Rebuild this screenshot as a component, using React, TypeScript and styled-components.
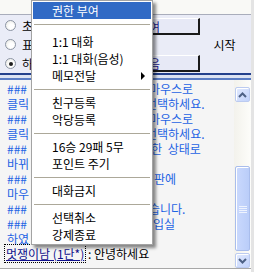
import React from 'react'
import styled, { createGlobalStyle, css } from 'styled-components'

const GlobalStyle = createGlobalStyle`
	html, body {
		margin: 0;
		padding: 0;
		background: #ffffff;
	}
	body {
		font-family: 'Noto Sans CJK KR', 'Noto Sans', sans-serif;
		font-size: 12px;
	}
`

// lead = start of the line, tail = the part that shows past the popup menu, at = x where the tail starts
const CHAT_LINES: { lead: string; tail?: string; at?: number }[] = [
	{ lead: '###', tail: '마우스로', at: 149 },
	{ lead: '클릭', tail: '선택하세요.', at: 146 },
	{ lead: '###', tail: '마우스로', at: 149 },
	{ lead: '클릭', tail: '선택하세요.', at: 146 },
	{ lead: '###', tail: '한 상태로', at: 151 },
	{ lead: '바뀌' },
	{ lead: '###', tail: '판에', at: 154 },
	{ lead: '마우' },
	{ lead: '###', tail: '습니다.', at: 149 },
	{ lead: '###', tail: '입실', at: 153 },
	{ lead: '하였' }
]

const MENU: ({ label: string; active?: boolean; sub?: boolean } | 'sep')[] = [
	{ label: '권한 부여', active: true },
	'sep',
	{ label: '1:1 대화' },
	{ label: '1:1 대화(음성)' },
	{ label: '메모전달', sub: true },
	'sep',
	{ label: '친구등록' },
	{ label: '악당등록' },
	'sep',
	{ label: '16승 29패 5무' },
	{ label: '포인트 주기' },
	'sep',
	{ label: '대화금지' },
	'sep',
	{ label: '선택취소' },
	{ label: '강제종료' }
]

export default function App() {
	return (
		<>
			<GlobalStyle />
			<Window>
				<TopStrip />
				<OptionsPanel>
					<RadioGroup>
						<RadioRow>
							<Radio />
							<RadioLabel>초보자</RadioLabel>
						</RadioRow>
						<RadioRow>
							<Radio />
							<RadioLabel>표준</RadioLabel>
						</RadioRow>
						<RadioRow>
							<Radio checked />
							<RadioLabel>하수</RadioLabel>
						</RadioRow>
					</RadioGroup>
					<ButtonStack>
						<PanelButton>참여</PanelButton>
						<PanelButton>다음</PanelButton>
					</ButtonStack>
					<StartLabel>시작</StartLabel>
				</OptionsPanel>
				<Divider />
				<ChatArea>
					<ChatLog>
						{CHAT_LINES.map((line, i) => (
							<ChatLine key={i} at={line.at}>
								<span>{line.lead}</span>
								{line.tail && <span>{line.tail}</span>}
							</ChatLine>
						))}
						<NickLine>
							<Nick>멋쟁이남 (1단*)</Nick>
							<Said> : 안녕하세요</Said>
						</NickLine>
					</ChatLog>
					<ScrollBar>
						<ScrollButton>
							<Chevron viewBox="0 0 9 6">
								<path d="M1 5 L4.5 1.5 L8 5" />
							</Chevron>
						</ScrollButton>
						<ScrollTrack>
							<Thumb>
								<Grip viewBox="0 0 8 8">
									<path d="M0 1.5 H8 M0 3.5 H8 M0 5.5 H8 M0 7.5 H8" />
								</Grip>
							</Thumb>
						</ScrollTrack>
						<ScrollButton>
							<Chevron viewBox="0 0 9 6">
								<path d="M1 1 L4.5 4.5 L8 1" />
							</Chevron>
						</ScrollButton>
					</ScrollBar>
				</ChatArea>
				<BottomEdge />

				<ContextMenu>
					{MENU.map((item, i) =>
						item === 'sep' ? (
							<MenuSeparator key={i} first={i === 1} />
						) : (
							<MenuItem key={i} active={item.active}>
								{item.label}
								{item.sub && <SubArrow />}
							</MenuItem>
						)
					)}
				</ContextMenu>
			</Window>
		</>
	)
}

const Window = styled.div`
	position: relative;
	width: 251px;
	height: 272px;
	overflow: hidden;
	display: flex;
	flex-direction: column;
	background: #f5f5f5;
	border-right: 3px solid #e4e4e4;
	color: #000;
`

const TopStrip = styled.div`
	height: 14px;
	background: #f9f9f6;
	border-bottom: 1px solid #a9adbb;
`

const OptionsPanel = styled.div`
	height: 58px;
	display: grid;
	grid-template-columns: 1fr 80px 51px;
	background: #eaecf7;
`

const RadioGroup = styled.div`
	display: flex;
	flex-direction: column;
	padding: 1px 0 0 5px;
`

const RadioRow = styled.label`
	height: 19px;
	display: flex;
	align-items: center;
	gap: 6px;
`

const Radio = styled.span<{ checked?: boolean }>`
	box-sizing: border-box;
	width: 11px;
	height: 11px;
	border-radius: 50%;
	border: 1px solid #8c94a3;
	background: radial-gradient(circle at 60% 60%, #ffffff 30%, #e4e4de 100%);
	display: flex;
	align-items: center;
	justify-content: center;
	${({ checked }) =>
		checked &&
		css`
			&::after {
				content: '';
				width: 4px;
				height: 4px;
				border-radius: 50%;
				background: #1e1e1e;
			}
		`}
`

const RadioLabel = styled.span`
	font-size: 12px;
	line-height: 12px;
	white-space: nowrap;
`

const ButtonStack = styled.div`
	display: flex;
	flex-direction: column;
	justify-content: space-between;
	padding: 3px 0 1px;
`

const PanelButton = styled.div`
	box-sizing: border-box;
	height: 17px;
	display: flex;
	justify-content: flex-end;
	align-items: center;
	background: #e7e9f6;
	border-top: 1px solid #ffffff;
	border-left: 1px solid #ffffff;
	border-right: 2px solid #1a1a1a;
	border-bottom: 2px solid #1a1a1a;
	color: #1c1c8e;
	font-size: 12px;
	padding-right: 38px;
	white-space: nowrap;
`

const StartLabel = styled.div`
	display: flex;
	align-items: center;
	justify-content: center;
	font-size: 12px;
	padding-right: 2px;
`

const Divider = styled.div`
	height: 7px;
	background: #dbe2f2;
	border-top: 2px solid #23408c;
	border-bottom: 2px solid #5a7cc4;
	box-sizing: border-box;
`

const ChatArea = styled.div`
	flex: 1;
	display: flex;
	min-height: 0;
`

const ChatLog = styled.div`
	flex: 1;
	padding: 1px 0 0 7px;
	overflow: hidden;
`

const ChatLine = styled.div<{ at?: number }>`
	display: grid;
	grid-template-columns: ${({ at }) => (at ? `${at - 7}px auto` : 'auto')};
	justify-items: start;
	height: 15px;
	line-height: 15px;
	font-size: 12px;
	word-spacing: 3px;
	white-space: pre;
	color: #1d63e4;
`

const NickLine = styled.div`
	height: 15px;
	line-height: 15px;
	font-size: 12px;
	white-space: pre;
`

const Nick = styled.span`
	color: #10108c;
	text-decoration: underline;
	outline: 1px dotted #000;
	margin-left: -2px;
	padding: 0 1px;
`

const Said = styled.span`
	color: #000;
`

const ScrollBar = styled.div`
	width: 17px;
	display: flex;
	flex-direction: column;
	background: linear-gradient(90deg, #f3f2ec, #fdfdfa);
	padding: 7px 1px 0 1px;
	box-sizing: border-box;
`

const ScrollButton = styled.div`
	box-sizing: border-box;
	height: 15px;
	border: 1px solid #bccbf0;
	border-radius: 2px;
	background: linear-gradient(135deg, #e2eafe, #c2d3fb);
	box-shadow: inset 1px 1px 0 #ffffff;
	display: flex;
	align-items: center;
	justify-content: center;
`

const Chevron = styled.svg`
	width: 9px;
	height: 6px;
	fill: none;
	stroke: #4d6185;
	stroke-width: 2;
`

const ScrollTrack = styled.div`
	flex: 1;
	display: flex;
	flex-direction: column;
	justify-content: flex-end;
	padding-bottom: 2px;
`

const Thumb = styled.div`
	box-sizing: border-box;
	height: 85px;
	border: 1px solid #a9bdec;
	border-radius: 2px;
	background: linear-gradient(90deg, #cad9fd, #bacdf9);
	box-shadow: inset 1px 1px 0 #ffffff;
	display: flex;
	align-items: center;
	justify-content: center;
`

const Grip = styled.svg`
	width: 8px;
	height: 8px;
	stroke: #eef3fe;
	stroke-width: 1;
`

const BottomEdge = styled.div`
	height: 4px;
	background: #ffffff;
	border-top: 1px solid #a7a7a7;
	box-sizing: border-box;
`

const ContextMenu = styled.div`
	position: absolute;
	left: 31px;
	top: 0;
	width: 122px;
	box-sizing: border-box;
	padding: 1px;
	background: #ffffff;
	border: 1px solid #a3a3a3;
	box-shadow: 3px 3px 3px rgba(0, 0, 0, 0.45);
`

const MenuItem = styled.div<{ active?: boolean }>`
	position: relative;
	height: 17px;
	line-height: 17px;
	padding-left: 19px;
	font-size: 12px;
	white-space: nowrap;
	color: #000;
	${({ active }) =>
		active &&
		css`
			background: #316ac5;
			color: #ffffff;
		`}
`

const SubArrow = styled.span`
	position: absolute;
	right: 6px;
	top: 5px;
	width: 0;
	height: 0;
	border-top: 4px solid transparent;
	border-bottom: 4px solid transparent;
	border-left: 4px solid #000;
`

const MenuSeparator = styled.div<{ first?: boolean }>`
	height: ${({ first }) => (first ? 14 : 10)}px;
	display: flex;
	align-items: ${({ first }) => (first ? 'flex-start' : 'center')};
	padding: ${({ first }) => (first ? '5px 1px 0' : '0 1px')};
	box-sizing: border-box;
	&::after {
		content: '';
		flex: 1;
		border-top: 1px solid #aca899;
	}
`
